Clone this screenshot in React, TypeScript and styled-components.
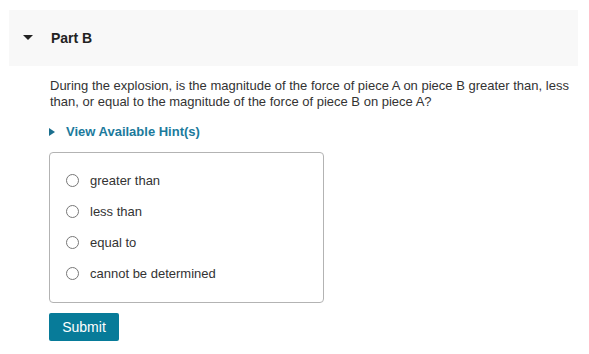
import React, { useState } from "react";
import styled, { createGlobalStyle } from "styled-components";

const GlobalStyle = createGlobalStyle`
  body {
    margin: 0;
    background: #ffffff;
    font-family: "Liberation Sans", Arial, sans-serif;
    color: #333333;
  }
`;

const choices = ["greater than", "less than", "equal to", "cannot be determined"];

export default function App() {
  const [selected, setSelected] = useState<number | null>(null);

  return (
    <Page>
      <GlobalStyle />
      <PartHeader>
        <Caret />
        <PartTitle>Part B</PartTitle>
      </PartHeader>
      <Body>
        <Question>
          During the explosion, is the magnitude of the force of piece A on piece B greater than, less
          than, or equal to the magnitude of the force of piece B on piece A?
        </Question>
        <HintToggle>
          <HintCaret />
          View Available Hint(s)
        </HintToggle>
        <ChoiceBox>
          {choices.map((choice, index) => (
            <Choice key={choice} onClick={() => setSelected(index)}>
              <Radio checked={selected === index} />
              <span>{choice}</span>
            </Choice>
          ))}
        </ChoiceBox>
        <SubmitButton>Submit</SubmitButton>
      </Body>
    </Page>
  );
}

const Page = styled.div`
  padding: 10px 11px 0 9px;
`;

const PartHeader = styled.div`
  display: flex;
  align-items: center;
  height: 56px;
  background: #f8f8f8;
  padding-left: 14px;
`;

const Caret = styled.span`
  width: 0;
  height: 0;
  border-left: 5px solid transparent;
  border-right: 5px solid transparent;
  border-top: 5px solid #222222;
  margin-top: -2px;
`;

const PartTitle = styled.h2`
  margin: 0 0 0 18px;
  font-size: 14px;
  font-weight: bold;
  color: #222222;
`;

const Body = styled.div`
  padding: 12px 0 0 40px;
`;

const Question = styled.p`
  margin: 0 0 0 1px;
  font-size: 13px;
  line-height: 16px;
  color: #333333;
`;

const HintToggle = styled.button`
  display: flex;
  align-items: center;
  gap: 11px;
  margin-top: 14px;
  padding: 0;
  border: none;
  background: none;
  font-family: inherit;
  font-size: 13px;
  font-weight: bold;
  color: #1b7a9c;
  cursor: pointer;
`;

const HintCaret = styled.span`
  width: 0;
  height: 0;
  border-top: 4.5px solid transparent;
  border-bottom: 4.5px solid transparent;
  border-left: 6px solid #1b6f8e;
`;

const ChoiceBox = styled.div`
  width: 273px;
  margin-top: 13px;
  padding: 18px 0 19px;
  border: 1px solid #b3b3b3;
  border-radius: 4px;
  display: flex;
  flex-direction: column;
  gap: 12px;
`;

const Choice = styled.label`
  display: flex;
  align-items: center;
  height: 19px;
  padding-left: 16px;
  font-size: 13px;
  color: #333333;
  cursor: pointer;
`;

const Radio = styled.span<{ checked: boolean }>`
  box-sizing: border-box;
  width: 13px;
  height: 13px;
  margin-right: 11px;
  border-radius: 50%;
  border: 1px solid #777777;
  background: ${(p) => (p.checked ? "radial-gradient(#1b7a9c 3px, #ffffff 4px)" : "#ffffff")};
`;

const SubmitButton = styled.button`
  display: block;
  margin-top: 10px;
  width: 70px;
  height: 28px;
  border: none;
  border-radius: 2px;
  background: #077b99;
  color: #ffffff;
  font-family: inherit;
  font-size: 14px;
  cursor: pointer;
`;
